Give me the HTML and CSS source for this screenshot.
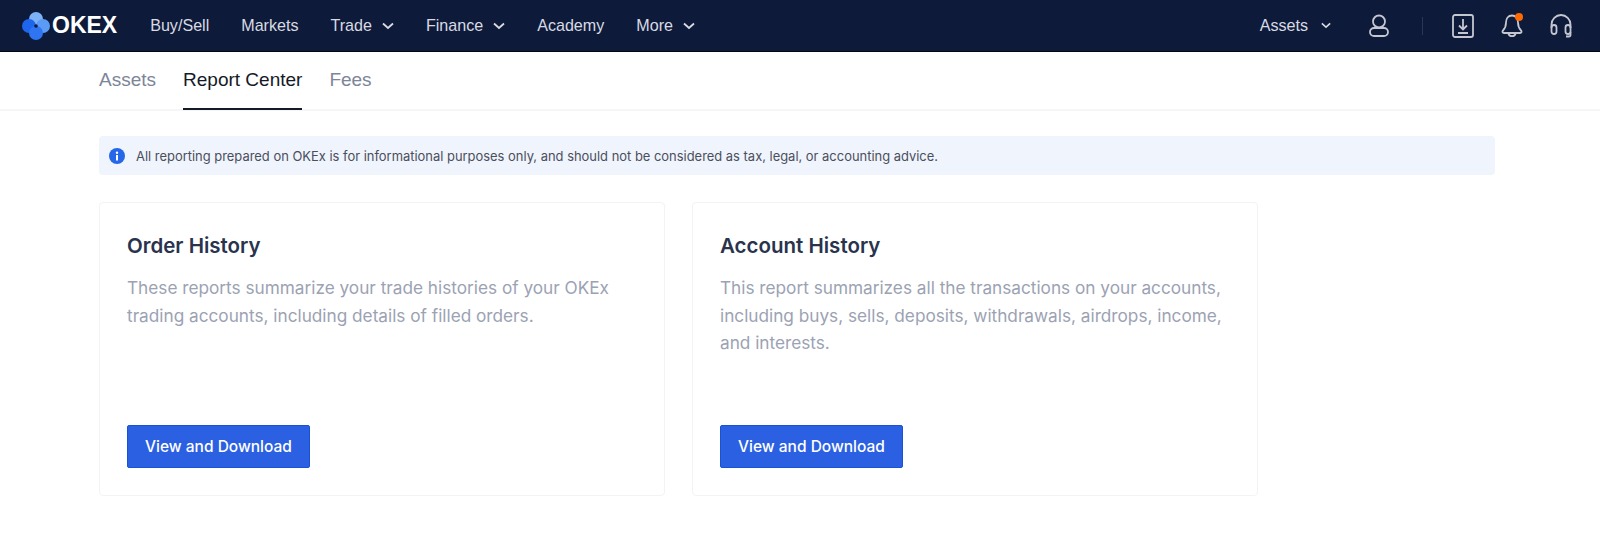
FILE: index.html
```html
<!DOCTYPE html>
<html lang="en">
<head>
  <meta charset="UTF-8">
  <title>Report Center</title>
  <link rel="stylesheet" href="styles.css">
</head>
<body>

  <header class="topbar">
    <a class="logo">
      <svg class="logo-mark" width="30" height="30" viewBox="0 0 30 30">
        <circle cx="15" cy="8" r="7" fill="#7db2f7"/>
        <circle cx="22" cy="15" r="7" fill="#5b9bf6"/>
        <circle cx="8" cy="15" r="7" fill="#1f66ee"/>
        <circle cx="15" cy="22" r="7" fill="#2f74f2"/>
        <circle cx="15" cy="15" r="1.8" fill="#0e1a3a"/>
      </svg>
      <span class="logo-text">OKEX</span>
    </a>
    <nav class="mainnav">
      <a>Buy/Sell</a>
      <a>Markets</a>
      <a>Trade <svg class="chev" width="12" height="8" viewBox="0 0 12 8"><path d="M1 1.5l5 4.5 5-4.5"/></svg></a>
      <a>Finance <svg class="chev" width="12" height="8" viewBox="0 0 12 8"><path d="M1 1.5l5 4.5 5-4.5"/></svg></a>
      <a>Academy</a>
      <a>More <svg class="chev" width="12" height="8" viewBox="0 0 12 8"><path d="M1 1.5l5 4.5 5-4.5"/></svg></a>
    </nav>
    <div class="usernav">
      <a class="assets-link">Assets <svg class="chev" width="10" height="7" viewBox="0 0 12 8"><path d="M1 1.5l5 4.5 5-4.5"/></svg></a>
      <svg class="icon icon-user" width="20" height="24" viewBox="0 0 20 24">
        <circle cx="10" cy="7.500" r="6"/>
        <rect x="1" y="14" width="18" height="8" rx="4"/>
      </svg>
      <span class="divider"></span>
      <svg class="icon icon-download" width="22" height="24" viewBox="0 0 22 24">
        <rect x="1" y="1" width="20" height="22" rx="2"/>
        <path d="M11 5v10M7 11.500l4 4 4-4M6 19h10"/>
      </svg>
      <span class="bell">
        <svg class="icon" width="22" height="24" viewBox="0 0 22 24">
          <path d="M11 1.500c-3.800 0-6 3-6 7 0 3.800-.8 5.800-3 8-1 1-.6 2.500 1 2.500h16c1.600 0 2-1.500 1-2.500-2.200-2.200-3-4.200-3-8 0-4-2.200-7-6-7z"/>
          <path d="M7.500 19.500c.6 3.600 6.400 3.600 7 0"/>
        </svg>
        <span class="bell-dot"></span>
      </span>
      <svg class="icon icon-headset" width="22" height="24" viewBox="0 0 22 24">
        <path d="M1.500 14v-3.500a9.500 9.500 0 0 1 19 0V14"/>
        <rect x="1.500" y="11" width="5" height="9" rx="2.500"/>
        <rect x="15.500" y="11" width="5" height="9" rx="2.500"/>
        <path d="M20.500 18v3c0 1-.6 1.500-1.700 1.500H16"/>
      </svg>
    </div>
  </header>

  <div class="tabs">
    <a class="tab">Assets</a>
    <a class="tab active">Report Center</a>
    <a class="tab">Fees</a>
  </div>

  <main class="content">
    <div class="notice">
      <svg width="16" height="16" viewBox="0 0 16 16">
        <circle cx="8" cy="8" r="8" fill="#2567e8"/>
        <rect x="7" y="7" width="2" height="5.500" fill="#fff"/>
        <circle cx="8" cy="4.800" r="1.200" fill="#fff"/>
      </svg>
      <span>All reporting prepared on OKEx is for informational purposes only, and should not be considered as tax, legal, or accounting advice.</span>
    </div>

    <div class="cards">
      <section class="card">
        <h3>Order History</h3>
        <p>These reports summarize your trade histories of your OKEx trading accounts, including details of filled orders.</p>
        <button>View and Download</button>
      </section>
      <section class="card">
        <h3>Account History</h3>
        <p>This report summarizes all the transactions on your accounts, including buys, sells, deposits, withdrawals, airdrops, income, and interests.</p>
        <button>View and Download</button>
      </section>
    </div>
  </main>

</body>
</html>
```

FILE: styles.css
```css
body {
  margin: 0;
  font-family: Inter, "Liberation Sans", sans-serif;
  background-color: white;
}

.topbar {
  display: flex;
  align-items: center;
  height: 52px;
  padding: 0 28px 0 21px;
  box-sizing: border-box;
  background-color: #0e1a3a;
  border-bottom: 1px solid #05070f;
  color: #d8dbe3;
  font-family: "Liberation Sans", Arial, sans-serif;
  font-size: 16.1px;
}
.logo {
  display: flex;
  align-items: center;
}
.logo-text {
  margin-left: 1px;
  color: white;
  font-size: 23px;
  font-weight: bold;
}
.mainnav {
  display: flex;
  gap: 32px;
  margin-left: 33px;
}
.mainnav a, .assets-link {
  display: flex;
  align-items: center;
  gap: 10px;
}
.chev {
  fill: none;
  stroke: #d8dbe3;
  stroke-width: 1.8;
}
.usernav {
  display: flex;
  align-items: center;
  margin-left: auto;
}
.assets-link {
  gap: 13px;
  margin-right: 38px;
}
.icon {
  display: block;
  fill: none;
  stroke: #c4c7d1;
  stroke-width: 1.8;
}
.divider {
  width: 1px;
  height: 18px;
  margin: 0 29px 0 33px;
  background-color: #2b3654;
}
.bell {
  position: relative;
  margin: 0 27px 0 27px;
}
.bell-dot {
  position: absolute;
  top: -1px;
  right: 0;
  width: 8px;
  height: 8px;
  border-radius: 50%;
  background-color: #ff6a00;
}

.tabs {
  display: flex;
  gap: 27px;
  height: 59px;
  padding-left: 99px;
  box-sizing: border-box;
  border-bottom: 2px solid #f6f6f7;
}
.tab {
  height: 58px;
  box-sizing: border-box;
  line-height: 56px;
  color: #7d8598;
  font-size: 19px;
  font-family: "Liberation Sans", Arial, sans-serif;
}
.tab.active {
  color: #141a26;
  border-bottom: 2px solid #141a26;
}

.content {
  padding: 25px 105px 0 99px;
}
.notice {
  display: flex;
  align-items: center;
  gap: 11px;
  height: 39px;
  padding-left: 10px;
  border-radius: 4px;
  background-color: #f0f4fd;
  color: #4a4f5c;
  font-size: 12.93px;
}
.cards {
  display: flex;
  gap: 27px;
  margin-top: 27px;
}
.card {
  display: flex;
  flex-direction: column;
  align-items: flex-start;
  width: 566px;
  height: 294px;
  padding: 29px 27px 27px;
  box-sizing: border-box;
  border: 1px solid #f3f3f5;
  border-radius: 4px;
}
.card h3 {
  margin: 0;
  color: #29334d;
  font-size: 20.5px;
  font-weight: 600;
  line-height: 28px;
}
.card p {
  margin: 14px 0 0;
  color: #9ba2b3;
  font-size: 17.22px;
  line-height: 27.500px;
}
button {
  margin-top: auto;
  width: 183px;
  height: 43px;
  border: 1px solid #1a52d6;
  border-radius: 2px;
  background-color: #2b60e2;
  color: white;
  font-family: Inter, "Liberation Sans", sans-serif;
  font-size: 15.5px;
  font-weight: 500;
}
```
